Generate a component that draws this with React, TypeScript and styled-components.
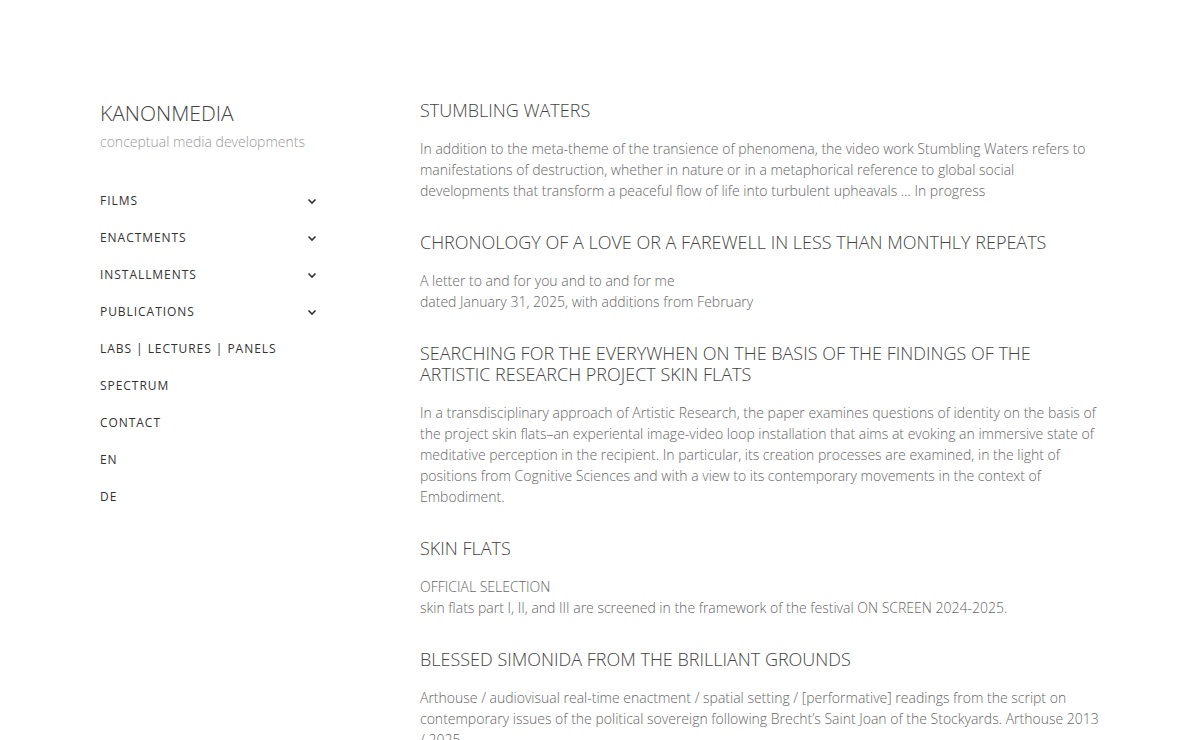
import React from 'react';
import styled, { createGlobalStyle } from 'styled-components';

const GlobalStyle = createGlobalStyle`
  html, body {
    margin: 0;
    padding: 0;
    background: #fff;
  }
  body {
    font-family: "Open Sans", "Liberation Sans", sans-serif;
    -webkit-font-smoothing: antialiased;
  }
`;

const Page = styled.div`
  display: flex;
  padding: 100px 0 0 100px;
  width: 1200px;
  box-sizing: border-box;
`;

const Sidebar = styled.aside`
  width: 320px;
  flex-shrink: 0;
`;

const Logo = styled.div`
  font-size: 21px;
  line-height: 26px;
  font-weight: 300;
  color: #444;
`;

const Tagline = styled.div`
  margin-top: 6px;
  font-size: 14px;
  line-height: 20px;
  font-weight: 300;
  color: #999;
`;

const Nav = styled.nav`
  margin-top: 30px;
  width: 222px;
`;

const NavItem = styled.div`
  display: flex;
  align-items: center;
  justify-content: space-between;
  height: 37px;
  font-size: 12px;
  letter-spacing: 0.95px;
  color: #333;
  font-weight: 400;
`;

const Chevron = styled.svg`
  width: 10px;
  height: 10px;
  margin-right: 5px;
`;

const Content = styled.main`
  width: 680px;
`;

const Entry = styled.section`
  & + & {
    margin-top: 31px;
  }
`;

const Title = styled.h2`
  margin: 0;
  font-size: 18px;
  line-height: 21px;
  font-weight: 300;
  color: #444;
`;

const Text = styled.p`
  margin: 17px 0 0;
  font-size: 14px;
  line-height: 21px;
  font-weight: 300;
  color: #666;
`;

const navItems = [
  { label: 'FILMS', sub: true },
  { label: 'ENACTMENTS', sub: true },
  { label: 'INSTALLMENTS', sub: true },
  { label: 'PUBLICATIONS', sub: true },
  { label: 'LABS | LECTURES | PANELS', sub: false },
  { label: 'SPECTRUM', sub: false },
  { label: 'CONTACT', sub: false },
  { label: 'EN', sub: false },
  { label: 'DE', sub: false },
];

const entries: { title: string; lines: string[] }[] = [
  {
    title: 'STUMBLING WATERS',
    lines: [
      'In addition to the meta-theme of the transience of phenomena, the video work Stumbling Waters refers to manifestations of destruction, whether in nature or in a metaphorical reference to global social developments that transform a peaceful flow of life into turbulent upheavals … In progress',
    ],
  },
  {
    title: 'CHRONOLOGY OF A LOVE OR A FAREWELL IN LESS THAN MONTHLY REPEATS',
    lines: ['A letter to and for you and to and for me', 'dated January 31, 2025, with additions from February'],
  },
  {
    title: 'SEARCHING FOR THE EVERYWHEN ON THE BASIS OF THE FINDINGS OF THE ARTISTIC RESEARCH PROJECT SKIN FLATS',
    lines: [
      'In a transdisciplinary approach of Artistic Research, the paper examines questions of identity on the basis of the project skin flats–an experiental image-video loop installation that aims at evoking an immersive state of meditative perception in the recipient. In particular, its creation processes are examined, in the light of positions from Cognitive Sciences and with a view to its contemporary movements in the context of Embodiment.',
    ],
  },
  {
    title: 'SKIN FLATS',
    lines: ['OFFICIAL SELECTION', 'skin flats part I, II, and III are screened in the framework of the festival ON SCREEN 2024-2025.'],
  },
  {
    title: 'BLESSED SIMONIDA FROM THE BRILLIANT GROUNDS',
    lines: [
      'Arthouse / audiovisual real-time enactment / spatial setting / [performative] readings from the script on contemporary issues of the political sovereign following Brecht’s Saint Joan of the Stockyards. Arthouse 2013 / 2025',
    ],
  },
];

export default function App() {
  return (
    <>
      <GlobalStyle />
      <Page>
        <Sidebar>
          <Logo>KANONMEDIA</Logo>
          <Tagline>conceptual media developments</Tagline>
          <Nav>
            {navItems.map((item) => (
              <NavItem key={item.label}>
                <span>{item.label}</span>
                {item.sub && (
                  <Chevron viewBox="0 0 10 10">
                    <polyline points="1.5,3.5 5,7 8.5,3.5" fill="none" stroke="#333" strokeWidth="1.6" />
                  </Chevron>
                )}
              </NavItem>
            ))}
          </Nav>
        </Sidebar>
        <Content>
          {entries.map((entry) => (
            <Entry key={entry.title}>
              <Title>{entry.title}</Title>
              <Text>
                {entry.lines.map((line, i) => (
                  <React.Fragment key={i}>
                    {i > 0 && <br />}
                    {line}
                  </React.Fragment>
                ))}
              </Text>
            </Entry>
          ))}
        </Content>
      </Page>
    </>
  );
}
